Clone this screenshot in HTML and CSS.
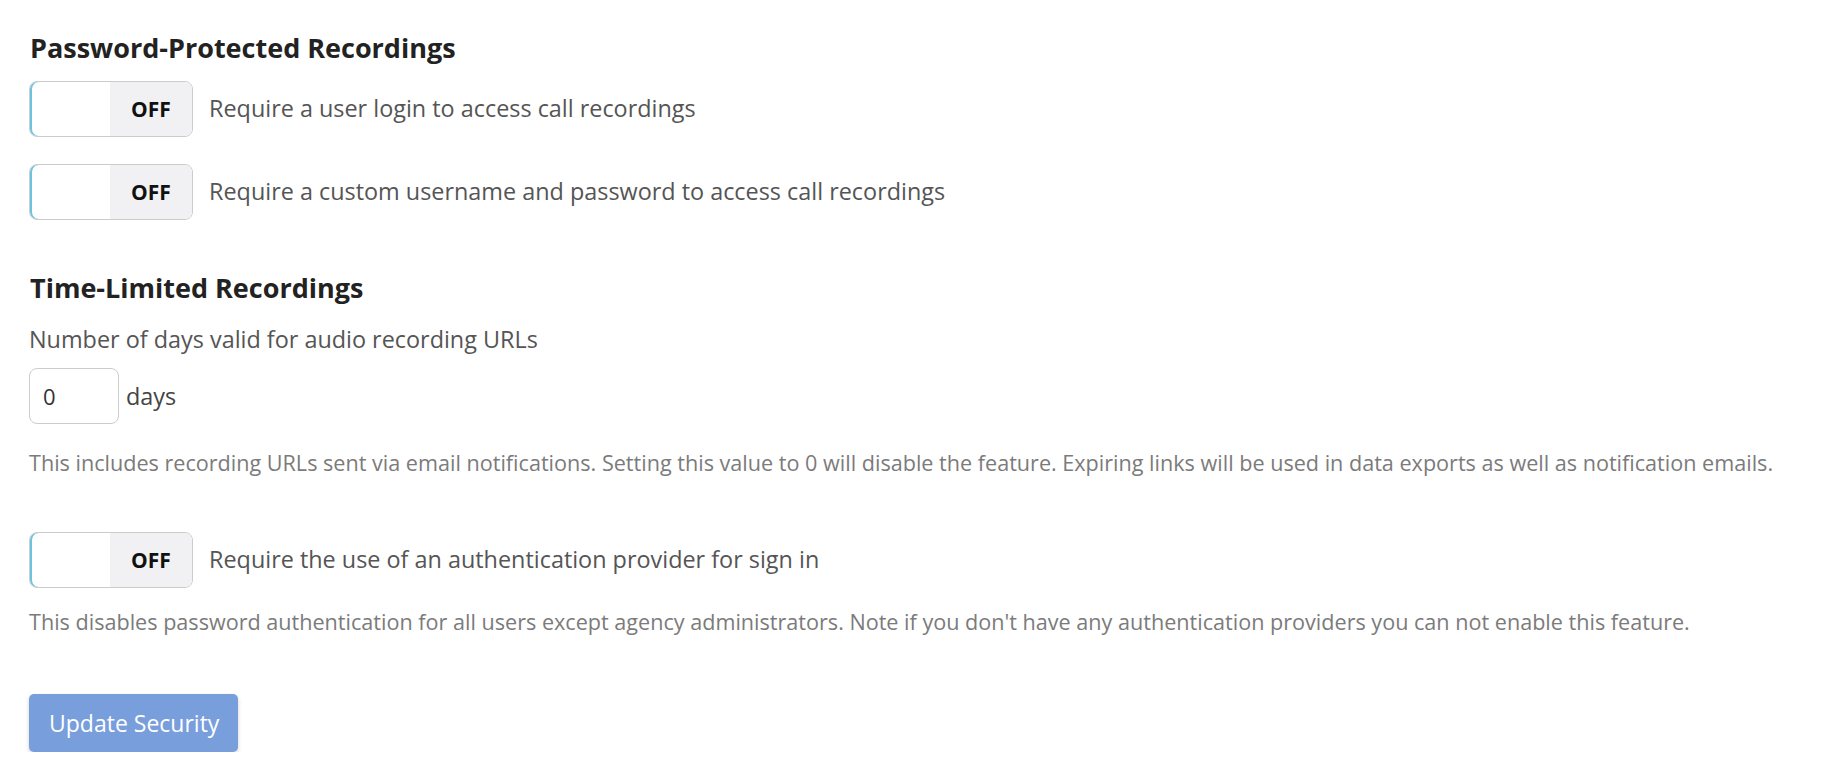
FILE: index.html
```html
<!DOCTYPE html>
<html lang="en">
<head>
    <meta charset="UTF-8">
    <meta name="viewport" content="width=device-width, initial-scale=1.0">
    <title>Security Settings</title>
    <link rel="stylesheet" href="styles.css">
</head>
<body>

    <form class="security-form">
        <h2 class="section-title">Password-Protected Recordings</h2>

        <div class="switch-row">
            <div class="switch">
                <span class="switch-handle"></span>
                <span class="switch-off">OFF</span>
            </div>
            <span class="switch-label">Require a user login to access call recordings</span>
        </div>

        <div class="switch-row">
            <div class="switch">
                <span class="switch-handle"></span>
                <span class="switch-off">OFF</span>
            </div>
            <span class="switch-label">Require a custom username and password to access call recordings</span>
        </div>

        <h2 class="section-title title-spaced">Time-Limited Recordings</h2>
        <p class="field-label">Number of days valid for audio recording URLs</p>

        <div class="days-row">
            <input type="text" class="days-input" value="0">
            <span class="days-unit">days</span>
        </div>

        <p class="help-text">This includes recording URLs sent via email notifications. Setting this value to 0 will disable the feature. Expiring links will be used in data exports as well as notification emails.</p>

        <div class="switch-row auth-row">
            <div class="switch">
                <span class="switch-handle"></span>
                <span class="switch-off">OFF</span>
            </div>
            <span class="switch-label">Require the use of an authentication provider for sign in</span>
        </div>

        <p class="help-text help-tight">This disables password authentication for all users except agency administrators. Note if you don't have any authentication providers you can not enable this feature.</p>

        <button type="submit" class="update-button">Update Security</button>
    </form>

</body>
</html>
```

FILE: styles.css
```css
body {
    font-family: 'Open Sans', 'Noto Sans', sans-serif;
    background-color: white;
    margin: 0;
    color: #555;
}
.security-form {
    padding: 31px 29px 0 29px;
}
.section-title {
    font-size: 27px;
    line-height: 34px;
    font-weight: 700;
    color: #222;
    margin: 0 0 16px 1px;
}
.title-spaced {
    margin-top: 51px;
    margin-bottom: 19px;
}
.switch-row {
    display: flex;
    align-items: center;
    gap: 16px;
    margin-bottom: 27px;
}
.switch {
    display: flex;
    width: 162px;
    height: 54px;
    border: 1px solid #ccc;
    border-radius: 8px;
    overflow: hidden;
    box-shadow: inset 2px 0 0 #6cc3df;
}
.switch-handle {
    width: 80px;
}
.switch-off {
    flex: 1;
    display: flex;
    align-items: center;
    justify-content: center;
    background-color: #f1f1f3;
    color: #111;
    font-size: 21px;
    font-weight: 700;
}
.switch-label {
    font-size: 23.4px;
    line-height: 30px;
    padding-bottom: 3px;
}
.field-label {
    font-size: 23.4px;
    line-height: 30px;
    margin: 0 0 14px 0;
}
.days-row {
    display: flex;
    align-items: center;
    gap: 7px;
}
.days-input {
    width: 90px;
    height: 56px;
    box-sizing: border-box;
    border: 1px solid #ccc;
    border-radius: 8px;
    padding: 0 13px;
    font-family: inherit;
    font-size: 22px;
    color: #333;
}
.days-unit {
    font-size: 23.4px;
    line-height: 30px;
    color: #444;
}
.help-text {
    font-size: 21.6px;
    line-height: 26px;
    color: #7b7b7b;
    margin: 26px 0 56px 0;
}
.auth-row {
    margin-bottom: 21px;
}
.help-tight {
    margin: 0 0 59px 0;
}
.update-button {
    height: 58px;
    padding: 0 19px 0 20px;
    border: none;
    border-radius: 5px;
    background-color: #799edc;
    color: white;
    font-family: inherit;
    font-size: 23px;
    box-shadow: 0 2px 4px rgba(0, 0, 0, 0.18);
    cursor: pointer;
}
```
